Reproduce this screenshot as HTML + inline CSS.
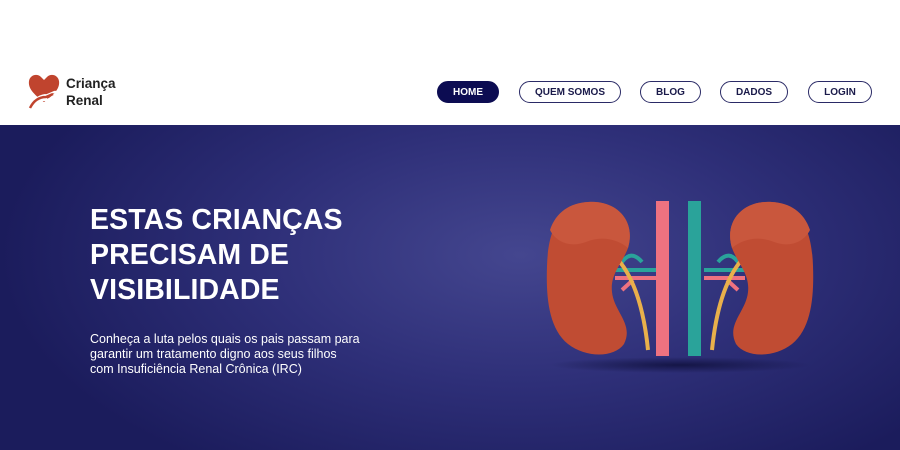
<!DOCTYPE html>
<html><head><meta charset="utf-8"><style>
*{margin:0;padding:0;box-sizing:border-box}
body{width:900px;height:450px;overflow:hidden;background:#fff;font-family:"Liberation Sans",sans-serif;position:relative}
.hero{position:absolute;left:0;top:125px;width:900px;height:325px;background:radial-gradient(ellipse 520px 260px at 520px 130px,#44468f 0%,#2e2f78 50%,#1b1c5c 100%)}
.btn{position:absolute;top:81px;height:22px;border:1.5px solid #2a2a66;border-radius:11px;font-size:10px;font-weight:bold;color:#1a1a4a;display:flex;align-items:center;justify-content:center}
h1{position:absolute;left:90px;top:203px;color:#fff;font-size:28.5px;line-height:35px;font-weight:bold;letter-spacing:0.1px}
p{position:absolute;left:90px;top:332px;color:#fff;font-size:12.5px;line-height:15px}
.logo{position:absolute;left:66px;top:75px;font-size:13.5px;font-weight:bold;color:#222;line-height:17px}
</style></head><body>
<svg style="position:absolute;left:27px;top:72px" width="34" height="38" viewBox="0 0 34 38">
<path d="M17 30 C6 22 1 16 2 9 C3 3 10 1 14 5 L17 8 L20 5 C24 1 31 3 32 9 C33 16 28 22 17 30Z" fill="#c0442e"/>
<path d="M4 34 C8 26 14 23 20 23 L27 20 C30 19 31 22 28 24 L20 28 L13 28 L20 26" fill="none" stroke="#fff" stroke-width="2"/>
<path d="M3 36 C7 28 13 25 19 25 L26 22" fill="none" stroke="#c0442e" stroke-width="2.5"/>
</svg>
<div class="logo">Criança<br>Renal</div>
<div class="btn" style="left:437px;width:62px;background:#0c0c52;border-color:#0c0c52;color:#fff">HOME</div>
<div class="btn" style="left:519px;width:102px">QUEM SOMOS</div>
<div class="btn" style="left:640px;width:61px">BLOG</div>
<div class="btn" style="left:720px;width:68px">DADOS</div>
<div class="btn" style="left:808px;width:64px">LOGIN</div>
<div class="hero"></div>
<h1>ESTAS CRIANÇAS<br>PRECISAM DE<br>VISIBILIDADE</h1>
<p>Conheça a luta pelos quais os pais passam para<br>garantir um tratamento digno aos seus filhos<br>com Insuficiência Renal Crônica (IRC)</p>
<svg style="position:absolute;left:530px;top:190px" width="300" height="190" viewBox="0 0 300 190">
<defs><radialGradient id="sh"><stop offset="0" stop-color="#0e0f3a" stop-opacity=".8"/><stop offset="1" stop-color="#0e0f3a" stop-opacity="0"/></radialGradient></defs>
<ellipse cx="150" cy="175" rx="130" ry="8" fill="url(#sh)"/>
<g fill="none" stroke-width="4">
<path d="M90 75 Q100 58 112 72" stroke="#2aa39a"/><path d="M85 80 L126 80" stroke="#2aa39a"/>
<path d="M85 88 L126 88" stroke="#ee7280"/><path d="M92 100 L103 90" stroke="#ee7280"/>
<path d="M90 72 Q112 100 118 160" stroke="#e9b04b"/>
<path d="M210 75 Q200 58 188 72" stroke="#2aa39a"/><path d="M215 80 L174 80" stroke="#2aa39a"/>
<path d="M215 88 L174 88" stroke="#ee7280"/><path d="M208 100 L197 90" stroke="#ee7280"/>
<path d="M210 72 Q188 100 182 160" stroke="#e9b04b"/>
</g>
<rect x="126" y="11" width="13" height="155" fill="#ee7280"/>
<rect x="158" y="11" width="13" height="155" fill="#2aa39a"/>
<path d="M58 12 C88 10 106 32 98 58 C92 74 80 84 82 102 C84 122 104 134 94 154 C84 168 56 168 38 154 C18 138 16 105 17 76 C18 40 30 14 58 12Z" fill="#c04c33"/>
<path d="M58 12 C88 10 106 32 98 58 C86 48 70 46 56 52 C40 58 26 52 20 40 C26 22 40 13 58 12Z" fill="#c9573d"/>
<path d="M242 12 C212 10 194 32 202 58 C208 74 220 84 218 102 C216 122 196 134 206 154 C216 168 244 168 262 154 C282 138 284 105 283 76 C282 40 270 14 242 12Z" fill="#c04c33"/>
<path d="M242 12 C212 10 194 32 202 58 C214 48 230 46 244 52 C260 58 274 52 280 40 C274 22 260 13 242 12Z" fill="#c9573d"/>
</svg>
</body></html>
